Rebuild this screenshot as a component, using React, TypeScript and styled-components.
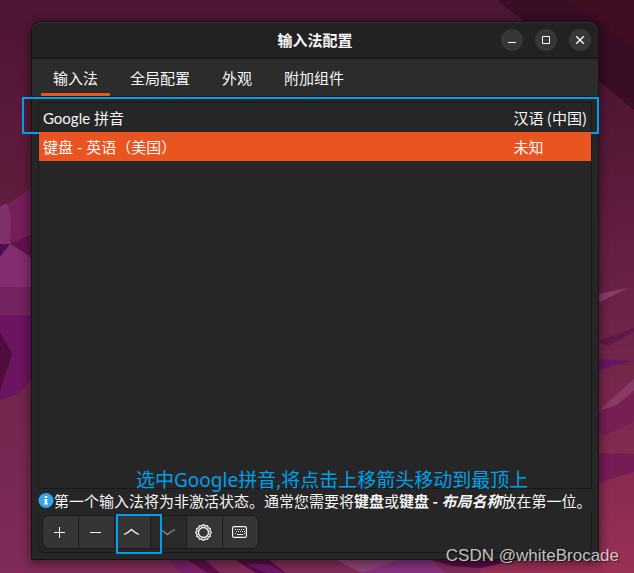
import React from "react";
import styled, { createGlobalStyle, css } from "styled-components";

const GlobalStyle = createGlobalStyle`
  * { box-sizing: border-box; }
  body { margin: 0; background: #5c1b3c; }
  button { font: inherit; color: inherit; }
`;

const Desktop = styled.div`
  position: relative;
  min-height: 100vh;
  padding: 21px 35px 13px 31px;
  display: flex;
  flex-direction: column;
  overflow: hidden;
  color: #f7f7f7;
  font: 15px/20px "Noto Sans CJK SC", sans-serif;
`;

const WallpaperArt = styled.svg`
  position: absolute;
  inset: 0;
  width: 100%;
  height: 100%;
`;

const Window = styled.main`
  position: relative;
  flex: 1;
  display: flex;
  flex-direction: column;
  border: 1px solid #151515;
  border-radius: 10px 10px 0 0;
  background: #262626;
  box-shadow: 0 2px 10px 2px rgba(0, 0, 0, 0.4);
`;

const TitleBar = styled.header`
  height: 37px;
  display: grid;
  grid-template-columns: 1fr auto 1fr;
  align-items: center;
  padding: 0 7px;
  border-radius: 9px 9px 0 0;
  border-bottom: 2px solid #1a1a1a;
  background: #222222;
  box-shadow: inset 0 1px #303030;
`;

const Title = styled.h1`
  grid-column: 2;
  margin: 0;
  font-size: 15px;
  line-height: 20px;
  font-weight: 700;
`;

const WindowControls = styled.div`
  display: flex;
  justify-content: flex-end;
  gap: 12px;
`;

const RoundButton = styled.button`
  width: 22px;
  height: 22px;
  padding: 0;
  border: 0;
  border-radius: 50%;
  background: #373737;
  display: grid;
  place-items: center;
`;

const Glyph = styled.svg`
  display: block;
  fill: none;
  stroke: currentColor;
`;

const TabBar = styled.nav`
  display: flex;
  gap: 8px;
  padding: 0 9px;
  height: 38px;
  border-bottom: 1px solid #1a1a1a;
  background: #2c2c2c;
`;

const Tab = styled.button<{ $active?: boolean }>`
  padding: 3px 12px 0;
  border: 0;
  border-bottom: 3px solid ${(p) => (p.$active ? "#e95420" : "transparent")};
  background: none;
  white-space: nowrap;
`;

const Content = styled.section`
  flex: 1;
  display: flex;
  flex-direction: column;
  padding: 5px 6px 6px;
`;

const ListFrame = styled.div`
  flex: 1;
  border: 1px solid #191919;
`;

const MethodTable = styled.table`
  width: 100%;
  border-collapse: collapse;
`;

const MethodRow = styled.tr<{ $selected?: boolean }>`
  position: relative;
  height: 29px;
  background: ${(p) => (p.$selected ? "#e95420" : "transparent")};
`;

const MethodCell = styled.td<{ $language?: boolean }>`
  padding: 0 4px;
  white-space: nowrap;
  ${(p) =>
    p.$language
      ? css`width: 81px;`
      : css`font-family: Lato, "Noto Sans CJK SC", sans-serif;`}
`;

const outline = css`
  position: absolute;
  border: 2px solid #00a0e9;
  pointer-events: none;
`;

const RowHighlight = styled.span`
  ${outline}
  inset: -6px -8px -2px -17px;
`;

const ButtonHighlight = styled.span`
  ${outline}
  inset: -2px -12px -6px 1px;
  z-index: 1;
`;

const Hint = styled.p`
  display: flex;
  align-items: center;
  margin: 0;
  height: 23px;
  white-space: nowrap;
`;

const HintText = styled.span`
  padding-top: 1px;
`;

const Caption = styled.strong`
  position: absolute;
  left: 104px;
  bottom: 69px;
  font: 400 19px/20px "Noto Sans", "Noto Sans CJK SC", sans-serif;
  color: #00a0e9;
  white-space: nowrap;
`;

const ToolFrame = styled.div`
  display: flex;
  padding: 3px 3px 3px;
  border: 1px solid #191919;
  border-top: 0;
  border-radius: 0 0 6px 6px;
`;

const ToolGroup = styled.div`
  display: flex;
  border: 1px solid #191919;
  border-radius: 7px;
`;

const ToolButton = styled.button`
  position: relative;
  width: 36px;
  height: 32px;
  padding: 0 2px 0 0;
  border: 0;
  border-right: 1px solid #191919;
  background: #353535;
  display: grid;
  place-items: center;
  &:first-child { border-radius: 6px 0 0 6px; }
  &:last-child { width: 35px; border-right: 0; border-radius: 0 6px 6px 0; }
  &:disabled { background: #2a2a2a; color: #8c8c8c; }
`;

const Watermark = styled.span`
  position: absolute;
  right: 15px;
  bottom: 5px;
  font: 17px/24px "Liberation Sans", sans-serif;
  color: rgba(225, 225, 225, 0.85);
  text-shadow: 1px 1px 1px rgba(0, 0, 0, 0.6);
`;

function Wallpaper() {
  return (
    <WallpaperArt viewBox="0 0 634 573" preserveAspectRatio="none" aria-hidden="true">
      <defs>
        <linearGradient id="sky" x1="0" y1="0" x2="0" y2="1">
          <stop offset="0" stopColor="#4e1535" />
          <stop offset="0.35" stopColor="#601d3e" />
          <stop offset="0.7" stopColor="#73264e" />
          <stop offset="1" stopColor="#802b58" />
        </linearGradient>
        <linearGradient id="right" x1="0" y1="0" x2="0" y2="1">
          <stop offset="0" stopColor="#4c1431" />
          <stop offset="0.5" stopColor="#6d2348" />
          <stop offset="1" stopColor="#993056" />
        </linearGradient>
      </defs>
      <path fill="url(#sky)" d="M0 0h634v573H0z" />
      <path fill="url(#right)" d="M560 60h74v513H480z" />
      <path fill="#390d25" d="M497 0h137v110L598 80z" />
      <path fill="#410d22" d="M568 0h66v48z" />
      <path fill="#761e5a" d="M0 210L32 187v48L10 245l-3-42z" />
      <path fill="#803067" d="M0 207l7-4 4 12-1 29H0z" />
      <path fill="#5d134c" d="M10 244l22-10v22z" />
      <path fill="#4f0c54" d="M0 244h10L0 257z" />
      <path fill="#852b70" d="M10 244l22 14v29H0v-30z" />
      <path fill="#752260" d="M0 287h32v28H0z" />
      <path fill="#6c145f" d="M0 315h32v63l-12 15-20 7z" />
      <path fill="#510c3e" d="M0 332l12 22-12 36z" />
      <path fill="#8b3b6b" d="M598 294l30-6-30 15z" />
      <path fill="#631648" d="M598 341l36-13v4l-27 14z" />
      <path fill="#681764" d="M598 359l36 2-36 9z" />
      <path fill="#771f53" d="M598 411l36-17v28l-28 13-8-2z" />
      <path fill="#8b3865" d="M598 411l36-32v11l-17 15z" />
      <path fill="#771b54" d="M598 453l36 1v18l-36 11z" />
      <path fill="#7a2168" d="M168 559h20l20 14h-28z" />
      <path fill="#5a1046" d="M186 559h18l16 14h-12z" />
      <path fill="#570b46" d="M234 559h34l18 14h-30z" />
      <path fill="#6c1868" d="M246 564h22l18 9h-20z" />
      <path fill="#8f4279" d="M334 559h68l-40 14z" />
      <path fill="#84327c" d="M402 559h28l16 14h-84z" />
      <path fill="#570b46" d="M430 559h90l-38 9-30-2z" />
    </WallpaperArt>
  );
}

function InfoIcon() {
  return (
    <svg width="16" height="18" viewBox="0 0 16 18" aria-hidden="true">
      <circle cx="8" cy="8.5" r="7.500" fill="#36a4e6" />
      <path fill="#fff" d="M6.800 4h2.400v2H6.800zM6 7.200h3.200v4.200H10v1.200H6v-1.200h.8V8.400H6z" />
    </svg>
  );
}

const gearPoints = Array.from({ length: 96 }, (_, i) => {
  const angle = (i / 96) * Math.PI * 2;
  const r = 7.2 + 0.6 * Math.cos(angle * 12);
  return `${(8.5 + r * Math.sin(angle)).toFixed(2)},${(8.5 - r * Math.cos(angle)).toFixed(2)}`;
}).join(" ");

export default function App() {
  return (
    <>
      <GlobalStyle />
      <Desktop>
        <Wallpaper />
        <Window>
          <TitleBar>
            <Title>输入法配置</Title>
            <WindowControls>
              <RoundButton aria-label="最小化">
                <Glyph width="10" height="10"><path d="M1 7.5h8" /></Glyph>
              </RoundButton>
              <RoundButton aria-label="最大化">
                <Glyph width="10" height="10"><path d="M1.5 1.5h7v7h-7z" /></Glyph>
              </RoundButton>
              <RoundButton aria-label="关闭">
                <Glyph width="10" height="10" strokeWidth="1.4"><path d="M1.2 1.2l7.6 7.6M8.8 1.2L1.2 8.8" /></Glyph>
              </RoundButton>
            </WindowControls>
          </TitleBar>
          <TabBar>
            <Tab $active>输入法</Tab>
            <Tab>全局配置</Tab>
            <Tab>外观</Tab>
            <Tab>附加组件</Tab>
          </TabBar>
          <Content>
            <ListFrame>
              <MethodTable>
                <tbody>
                  <MethodRow>
                    <MethodCell>Google 拼音<RowHighlight /></MethodCell>
                    <MethodCell $language>汉语 (中国)</MethodCell>
                  </MethodRow>
                  <MethodRow $selected>
                    <MethodCell>键盘 - 英语（美国）</MethodCell>
                    <MethodCell $language>未知</MethodCell>
                  </MethodRow>
                </tbody>
              </MethodTable>
            </ListFrame>
            <Hint>
              <InfoIcon />
              <HintText>
                第一个输入法将为非激活状态。通常您需要将<b>键盘</b>或<b>键盘 - <i>布局名称</i></b>放在第一位。
              </HintText>
            </Hint>
            <ToolFrame>
              <ToolGroup>
                <ToolButton aria-label="添加">
                  <Glyph width="11" height="12"><path d="M0 6.5h11M5.5 1v11" /></Glyph>
                </ToolButton>
                <ToolButton aria-label="移除">
                  <Glyph width="11" height="12"><path d="M0 6.5h11" /></Glyph>
                </ToolButton>
                <ToolButton aria-label="上移">
                  <Glyph width="17" height="8" strokeWidth="1.3"><path d="M1 6.5Q5.500 4.500 8.500 1.500q3 3 7.500 5" /></Glyph>
                  <ButtonHighlight />
                </ToolButton>
                <ToolButton aria-label="下移" disabled>
                  <Glyph width="17" height="8" strokeWidth="1.3"><path d="M1 1.500Q5.500 3.500 8.500 6.500q3-3 7.500-5" /></Glyph>
                </ToolButton>
                <ToolButton aria-label="配置">
                  <Glyph width="17" height="17" strokeWidth="1.3">
                    <polygon points={gearPoints} />
                    <circle cx="8.5" cy="8.5" r="5" />
                  </Glyph>
                </ToolButton>
                <ToolButton aria-label="键盘布局">
                  <Glyph width="15" height="12">
                    <rect x=".6" y=".6" width="13.8" height="10.8" rx="1.5" strokeWidth="1.2" />
                    <path d="M3 3.5h10M4 5.500h9M3 7.500h1M12 7.500h1" strokeDasharray="1 1" />
                    <path d="M5 8.500h6" />
                  </Glyph>
                </ToolButton>
              </ToolGroup>
            </ToolFrame>
          </Content>
          <Caption>选中Google拼音,将点击上移箭头移动到最顶上</Caption>
        </Window>
        <Watermark>CSDN @whiteBrocade</Watermark>
      </Desktop>
    </>
  );
}
